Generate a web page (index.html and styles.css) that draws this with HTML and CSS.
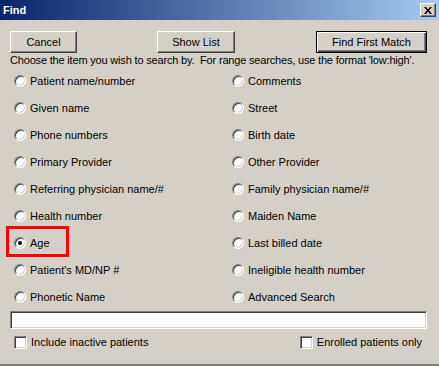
FILE: index.html
```html
<!DOCTYPE html>
<html lang="en">

<head>
    <meta charset="UTF-8">
    <title>Find</title>
    <link rel="stylesheet" href="styles.css">
</head>

<body>
    <div class="window">
        <div class="titlebar">
            <span class="title">Find</span>
            <span class="close-btn">
                <svg width="8" height="7" viewBox="0 0 8 7">
                    <path d="M0 0h2l2 2.5 2-2.5h2l-3 3.5 3 3.5h-2l-2-2.5-2 2.5h-2l3-3.5z" fill="#000"/>
                </svg>
            </span>
        </div>

        <div class="content">
            <div class="button-row">
                <button class="btn btn-cancel">Cancel</button>
                <button class="btn btn-list">Show List</button>
                <button class="btn btn-default">Find First Match</button>
            </div>

            <p class="hint">Choose the item you wish to search by.&nbsp; For range searches, use the format 'low:high'.</p>

            <div class="options">
                <label class="option"><span class="radio"></span>Patient name/number</label>
                <label class="option"><span class="radio"></span>Comments</label>
                <label class="option"><span class="radio"></span>Given name</label>
                <label class="option"><span class="radio"></span>Street</label>
                <label class="option"><span class="radio"></span>Phone numbers</label>
                <label class="option"><span class="radio"></span>Birth date</label>
                <label class="option"><span class="radio"></span>Primary Provider</label>
                <label class="option"><span class="radio"></span>Other Provider</label>
                <label class="option"><span class="radio"></span>Referring physician name/#</label>
                <label class="option"><span class="radio"></span>Family physician name/#</label>
                <label class="option"><span class="radio"></span>Health number</label>
                <label class="option"><span class="radio"></span>Maiden Name</label>
                <label class="option selected"><span class="radio checked"></span>Age<span class="highlight"></span></label>
                <label class="option"><span class="radio"></span>Last billed date</label>
                <label class="option"><span class="radio"></span>Patient's MD/NP #</label>
                <label class="option"><span class="radio"></span>Ineligible health number</label>
                <label class="option"><span class="radio"></span>Phonetic Name</label>
                <label class="option"><span class="radio"></span>Advanced Search</label>
            </div>

            <div class="search-box"></div>

            <div class="check-row">
                <label class="check"><span class="checkbox"></span>Include inactive patients</label>
                <label class="check"><span class="checkbox"></span>Enrolled patients only</label>
            </div>
        </div>
    </div>
</body>

</html>
```

FILE: styles.css
```css
body {
    margin: 0;
    padding: 0;
    font-family: "Liberation Sans", Arial, sans-serif;
    font-size: 11px;
    color: #000;
    background-color: #d4d0c8;
}

.window {
    width: 439px;
    height: 366px;
    background-color: #d4d0c8;
    box-sizing: border-box;
    border-bottom: 2px solid #808080;
    overflow: hidden;
}

.titlebar {
    height: 20px;
    background: linear-gradient(to right, #0a246a, #a6caf0);
    display: flex;
    align-items: center;
    justify-content: space-between;
    padding: 0 3px 0 3px;
    box-sizing: border-box;
}

.title {
    color: #fff;
    font-weight: bold;
    font-size: 11px;
}

.close-btn {
    width: 16px;
    height: 14px;
    background-color: #d4d0c8;
    box-sizing: border-box;
    border: 1px solid;
    border-color: #fff #404040 #404040 #fff;
    box-shadow: inset -1px -1px #808080;
    display: flex;
    align-items: center;
    justify-content: center;
}

.content {
    padding: 11px 12px 0 10px;
}

.button-row {
    display: flex;
    height: 22px;
}

.btn {
    font-family: "Liberation Sans", Arial, sans-serif;
    font-size: 11px;
    color: #000;
    background-color: #d4d0c8;
    height: 22px;
    padding: 0;
    box-sizing: border-box;
    border: 1px solid;
    border-color: #fff #404040 #404040 #fff;
    box-shadow: inset -1px -1px #808080;
}

.btn-cancel {
    width: 67px;
}

.btn-list {
    width: 78px;
    margin-left: 80px;
}

.btn-default {
    width: 111px;
    margin-left: 81px;
    border: 1px solid #000;
    box-shadow: inset 1px 1px #fff, inset -1px -1px #404040, inset -2px -2px #808080;
}

.hint {
    margin: 0;
    height: 14px;
    line-height: 14px;
    white-space: nowrap;
    letter-spacing: -0.18px;
}

.options {
    display: grid;
    grid-template-columns: 218px 200px;
    grid-auto-rows: 27px;
    padding-left: 4px;
}

.option {
    position: relative;
    display: flex;
    align-items: center;
    white-space: nowrap;
}

.radio {
    width: 12px;
    height: 12px;
    border-radius: 50%;
    box-sizing: border-box;
    background-color: #fff;
    border: 1px solid;
    border-color: #808080 #fff #fff #808080;
    box-shadow: inset 1px 1px #404040, inset -1px -1px #d4d0c8;
    margin-right: 4px;
    flex-shrink: 0;
    position: relative;
}

.radio.checked::after {
    content: "";
    position: absolute;
    left: 3px;
    top: 3px;
    width: 4px;
    height: 4px;
    border-radius: 50%;
    background-color: #000;
}

.highlight {
    position: absolute;
    left: -8px;
    top: -3px;
    width: 63px;
    height: 31px;
    border: 3px solid #f00;
    box-sizing: border-box;
}

.search-box {
    height: 18px;
    margin-top: 1px;
    background-color: #fff;
    box-sizing: border-box;
    border: 1px solid;
    border-color: #808080 #fff #fff #808080;
    box-shadow: inset 1px 1px #404040, inset -1px -1px #d4d0c8;
}

.check-row {
    display: flex;
    justify-content: space-between;
    height: 22px;
    margin-top: 2px;
    padding: 0 5px 0 4px;
    align-items: center;
}

.check {
    display: flex;
    align-items: center;
}

.checkbox {
    width: 13px;
    height: 13px;
    box-sizing: border-box;
    background-color: #fff;
    border: 1px solid;
    border-color: #808080 #fff #fff #808080;
    box-shadow: inset 1px 1px #404040, inset -1px -1px #d4d0c8;
    margin-right: 4px;
}
```
